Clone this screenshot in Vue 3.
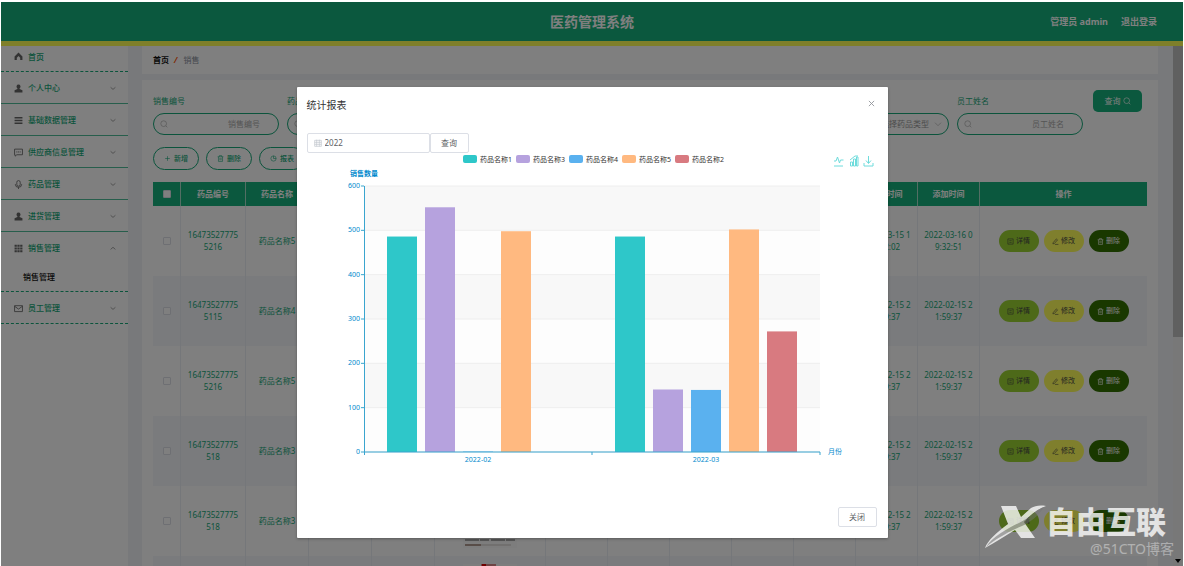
<script setup>
import { ref } from 'vue'

const menu = [
  { name: '首页', icon: 'home', short: true },
  { name: '个人中心', icon: 'user', arrow: 'down' },
  { name: '基础数据管理', icon: 'list', arrow: 'down' },
  { name: '供应商信息管理', icon: 'chat', arrow: 'down' },
  { name: '药品管理', icon: 'mic', arrow: 'down' },
  { name: '进货管理', icon: 'user', arrow: 'down' },
  { name: '销售管理', icon: 'grid', arrow: 'up', children: ['销售管理'] },
  { name: '员工管理', icon: 'mail', arrow: 'down' },
]

const filters = [
  { id: 'f1', label: '销售编号', type: 'text' },
  { id: 'f2', label: '药品名称', type: 'text' },
  { id: 'f3', label: '', type: 'none' },
  { id: 'f4', label: '', type: 'none' },
  { id: 'f5', label: '', type: 'none' },
  { id: 'f6', label: '药品类型', type: 'select' },
  { id: 'f7', label: '员工姓名', type: 'text' },
]

const rows = [
  { code: '164735277755216', name: '药品名称5', sold: '2022-03-15 14:52:02', added: '2022-03-16 09:32:51' },
  { code: '164735277755115', name: '药品名称4', sold: '2022-02-15 21:59:37', added: '2022-02-15 21:59:37' },
  { code: '164735277755216', name: '药品名称5', sold: '2022-02-15 21:59:37', added: '2022-02-15 21:59:37' },
  { code: '16473527775518', name: '药品名称3', sold: '2022-02-15 21:59:37', added: '2022-02-15 21:59:37' },
  { code: '16473527775518', name: '药品名称3', sold: '2022-02-15 21:59:37', added: '2022-02-15 21:59:37' },
]

const year = ref('2022')

const series = [
  { name: '药品名称1', color: '#2ec7c9', data: [486, 486] },
  { name: '药品名称3', color: '#b6a2de', data: [552, 141] },
  { name: '药品名称4', color: '#5ab1ef', data: [1, 140] },
  { name: '药品名称5', color: '#ffb980', data: [498, 502] },
  { name: '药品名称2', color: '#d87a80', data: [0, 272] },
]
const months = ['2022-02', '2022-03']

const plot = { left: 57, top: 32, width: 456, height: 266 }
const ticks = [600, 500, 400, 300, 200, 100, 0]
const yOf = (v) => plot.top + plot.height * (1 - v / 600)
const half = plot.width / 2
const bars = series.flatMap((s, i) =>
  s.data.map((v, m) => ({
    x: plot.left + m * half + 23 + i * 38,
    y: yOf(v),
    h: (plot.height * v) / 600,
    color: s.color,
  })).filter((b) => b.h > 0)
)
</script>

<template>
  <div class="screen">
    <div class="page">
      <header class="top">
        <h1>医药管理系统</h1>
        <div class="account">
          <span>管理员 admin</span>
          <a href="#">退出登录</a>
        </div>
      </header>

      <div class="body">
        <nav class="side">
          <div v-for="m in menu" :key="m.name + m.icon" class="group" :class="{ dotted: m.short || m.icon === 'grid' || m.icon === 'mail' }">
            <a href="#" class="item" :class="{ short: m.short }">
              <svg class="mi" viewBox="0 0 16 16" aria-hidden="true">
                <path v-if="m.icon === 'home'" d="M8 1 1 8v6h4v-4l3-3 3 3v4h4V8z" fill="currentColor" />
                <path v-else-if="m.icon === 'user'" d="M8 1a3.6 3.6 0 0 1 2 6.600v1.400l5 2v4H1v-4l5-2V7.600A3.600 3.600 0 0 1 8 1z" fill="currentColor" />
                <path v-else-if="m.icon === 'list'" d="M1 3h14M1 8h14M1 13h14" stroke="currentColor" stroke-width="2.500" />
                <path v-else-if="m.icon === 'chat'" d="M1 2h14v10H5l-3 2.500V12H1zM4 7h2m1 0h2m1 0h2" fill="none" stroke="currentColor" stroke-width="1.500" />
                <path v-else-if="m.icon === 'mic'" d="M5 4a3 3 0 0 1 6 0v4a3 3 0 0 1-6 0zM2.500 7v1a5.500 5 0 0 0 11 0V7M8 13v3" fill="none" stroke="currentColor" stroke-width="1.500" />
                <path v-else-if="m.icon === 'grid'" d="M1 3h4m1 0h4m1 0h4M1 8h4m1 0h4m1 0h4M1 13h4m1 0h4m1 0h4" stroke="currentColor" stroke-width="3.500" />
                <path v-else d="M1 3h14v10.500H1zM1 4l7 5 7-5" fill="none" stroke="currentColor" stroke-width="1.500" />
              </svg>
              <span>{{ m.name }}</span>
              <svg v-if="m.arrow" class="arrow" viewBox="0 0 10 6" aria-hidden="true">
                <path :d="m.arrow === 'down' ? 'M1 1l4 3.500 4-3.500' : 'M1 4.500 5 1l4 3.500'" fill="none" stroke="currentColor" stroke-width="1.300" />
              </svg>
            </a>
            <a v-for="c in m.children" :key="c" href="#" class="sub">{{ c }}</a>
          </div>
        </nav>

        <main class="main">
          <div class="crumb">
            <a href="#">首页</a><i>/</i><span>销售</span>
          </div>

          <section class="card">
            <form class="filters" @submit.prevent>
              <div v-for="f in filters" :key="f.id" class="field">
                <template v-if="f.type === 'text'">
                  <label :for="f.id">{{ f.label }}</label>
                  <div class="box">
                    <svg class="ic" viewBox="0 0 12 12" aria-hidden="true"><circle cx="5.500" cy="5.500" r="4.300" fill="none" stroke="currentColor" /><path d="M8.800 8.800l2.200 2.200" stroke="currentColor" /></svg>
                    <input :id="f.id" type="text" :placeholder="f.label" />
                  </div>
                </template>
                <template v-else-if="f.type === 'select'">
                  <label :for="f.id">{{ f.label }}</label>
                  <div class="box">
                    <select :id="f.id"><option>请选择药品类型</option></select>
                    <svg class="ic" viewBox="0 0 12 12" aria-hidden="true"><path d="M1.500 4 6 8.500 10.500 4" fill="none" stroke="currentColor" /></svg>
                  </div>
                </template>
              </div>
              <button class="query" type="submit">查询
                <svg class="ic" viewBox="0 0 12 12" aria-hidden="true"><circle cx="5.500" cy="5.500" r="4.300" fill="none" stroke="currentColor" /><path d="M8.800 8.800l2.200 2.200" stroke="currentColor" /></svg>
              </button>
            </form>

            <div class="tools">
              <button type="button">
                <svg class="ic" viewBox="0 0 12 12" aria-hidden="true"><path d="M6 2v8M2 6h8" stroke="currentColor" /></svg>新增
              </button>
              <button type="button">
                <svg class="ic" viewBox="0 0 12 12" aria-hidden="true"><path d="M1 3h10M4 3V1h4v2M2.500 3v8h7V3M5 5v4M7 5v4" fill="none" stroke="currentColor" /></svg>删除
              </button>
              <button type="button">
                <svg class="ic" viewBox="0 0 12 12" aria-hidden="true"><circle cx="6" cy="6" r="4.500" fill="none" stroke="currentColor" /><path d="M6 1.500V6h4.500" fill="none" stroke="currentColor" /></svg>报表
              </button>
            </div>

            <table class="grid">
              <colgroup>
                <col class="c-check" /><col class="c-code" /><col v-for="n in 3" :key="'a' + n" class="c-mid" />
                <col class="c-pic" /><col v-for="n in 7" :key="'b' + n" class="c-std" /><col />
              </colgroup>
              <thead>
                <tr>
                  <th><input type="checkbox" aria-label="全选" /></th>
                  <th>药品编号</th>
                  <th>药品名称</th>
                  <th v-for="n in 8" :key="n"></th>
                  <th>销售时间</th>
                  <th>添加时间</th>
                  <th>操作</th>
                </tr>
              </thead>
              <tbody>
                <tr v-for="(r, i) in rows" :key="i">
                  <td><input type="checkbox" aria-label="选择" /></td>
                  <td>{{ r.code }}</td>
                  <td class="nowrap">{{ r.name }}</td>
                  <td></td>
                  <td></td>
                  <td>
                    <svg class="pic" viewBox="0 0 54 54" aria-hidden="true">
                      <rect width="54" height="54" fill="#fafafa" />
                      <path d="M18 1h15" stroke="#d88" stroke-width="2" /><path d="M19 1h4" stroke="#e00000" stroke-width="2" />
                      <path d="M2 46h50" stroke="#aaa" stroke-width="2" stroke-dasharray="14 1 9 2" />
                      <path d="M2 51h16" stroke="#b09a90" stroke-width="2" /><path d="M18 51h30" stroke="#cdc6c2" />
                    </svg>
                  </td>
                  <td v-for="n in 5" :key="n"></td>
                  <td>{{ r.sold }}</td>
                  <td>{{ r.added }}</td>
                  <td>
                    <div class="ops">
                      <button type="button" class="op view">
                        <svg class="ic" viewBox="0 0 12 12" aria-hidden="true"><path d="M1.500 1.500h9v9h-9zM4 4.500h4M4 7.500h4" fill="none" stroke="currentColor" /></svg>详情
                      </button>
                      <button type="button" class="op edit">
                        <svg class="ic" viewBox="0 0 12 12" aria-hidden="true"><path d="M2 8 7.500 1.500l2 1.700L4 9.500l-2.500.5zM5 11h6" fill="none" stroke="currentColor" /></svg>修改
                      </button>
                      <button type="button" class="op del">
                        <svg class="ic" viewBox="0 0 12 12" aria-hidden="true"><path d="M1 3h10M4 3V1h4v2M2.500 3v8h7V3M5 5v4M7 5v4" fill="none" stroke="currentColor" /></svg>删除
                      </button>
                    </div>
                  </td>
                </tr>
                <tr>
                  <td v-for="n in 5" :key="'l' + n"></td>
                  <td>
                    <svg class="pic" viewBox="0 0 54 54" aria-hidden="true">
                      <rect width="54" height="54" fill="#fafafa" />
                      <path d="M18 1h15" stroke="#d88" stroke-width="2" /><path d="M19 1h4" stroke="#e00000" stroke-width="2" />
                    </svg>
                  </td>
                  <td v-for="n in 8" :key="'r' + n"></td>
                </tr>
              </tbody>
            </table>
          </section>
        </main>

        <div class="scroll" aria-hidden="true">
          <div class="thumb"></div>
          <svg viewBox="0 0 10 10"><path d="M2 3h6L5 7z" /></svg>
        </div>
      </div>

      <div class="mask">
        <div class="dialog" role="dialog" aria-labelledby="dlg-title">
          <div class="dlg-head">
            <h2 id="dlg-title">统计报表</h2>
            <button type="button" class="close" aria-label="关闭">
              <svg viewBox="0 0 8 8" aria-hidden="true"><path d="M1 1l6 6M7 1 1 7" stroke="currentColor" /></svg>
            </button>
          </div>
          <div class="pick">
            <div class="date">
              <svg viewBox="0 0 12 12" aria-hidden="true"><path d="M1 2h10v9H1zM1 5h10M1 8h10M4 1v10M8 1v10" fill="none" stroke="currentColor" /></svg>
              <input v-model="year" type="text" aria-label="年份" />
            </div>
            <button type="button" class="plain">查询</button>
          </div>

          <svg class="chart" viewBox="0 0 571 342" role="img" aria-label="销售数量统计">
            <g v-for="(s, i) in series" :key="s.name">
              <rect :x="156 + i * 53" y="1" width="14" height="8" rx="2" :fill="s.color" />
              <text :x="173 + i * 53" y="8" class="legend">{{ s.name }}</text>
            </g>
            <g class="toolbox">
              <path d="M527 7h2l1.500-4 2 6 1-3h3M527 12h9" />
              <path d="M543.500 12V8h2v4zM546.500 12V5h2v7zM549.500 12V3h1.500v9zM543 6l5-4h3" />
              <path d="M561.500 2v7M559 6.500l2.500 3 2.500-3M557 9v3h9V9" />
            </g>
            <template v-for="(t, i) in ticks" :key="t">
              <rect v-if="t > 0" :x="plot.left" :y="yOf(t)" :width="plot.width" :height="plot.height / 6" :fill="i % 2 ? '#fdfdfd' : '#f8f8f8'" />
              <path :d="`M${plot.left} ${yOf(t)}h${plot.width}`" class="split" />
            </template>
            <rect v-for="(b, i) in bars" :key="i" :x="b.x" :y="b.y" width="30" :height="b.h" :fill="b.color" />
            <path :d="`M${plot.left + 0.5} ${plot.top}V${plot.top + plot.height + 3}`" class="axis" />
            <path v-for="t in ticks" :key="'t' + t" :d="`M${plot.left - 3} ${yOf(t)}h3`" class="axis" />
            <path :d="`M${plot.left} ${plot.top + plot.height}h${plot.width}v3M${plot.left + half} ${plot.top + plot.height}v3`" class="axis" />
            <text v-for="t in ticks" :key="'l' + t" :x="plot.left - 4" :y="yOf(t) + 2" text-anchor="end" class="lab">{{ t }}</text>
            <text v-for="(m, i) in months" :key="m" :x="plot.left + half * (i + 0.5)" :y="plot.top + plot.height + 10" text-anchor="middle" class="lab">{{ m }}</text>
            <text x="57" y="22" text-anchor="middle" class="lab strong">销售数量</text>
            <text x="521" y="300" class="lab">月份</text>
          </svg>

          <div class="dlg-foot"><button type="button" class="plain">关闭</button></div>
        </div>
      </div>

      <div class="mark">
        <svg viewBox="0 0 62 44" aria-hidden="true">
          <path d="M17 1h15l5 11 10-9c4-2 8-3 15-2C54 4 47 9 40 17l11 16H37l-6-8C21 31 12 37 1 43 4 35 12 28 24 19z" fill="#fff" />
          <path d="M2 42C10 29 30 21 42 14 49 9 54 4 60 2 54 11 47 17 38 21 22 28 12 34 2 42z" fill="#777" opacity=".6" />
        </svg>
        <div class="words"><strong>自由互联</strong><span>@51CTO博客</span></div>
      </div>
    </div>
  </div>
</template>

<style>
html, body { margin: 0; background: #fff; }
</style>

<style scoped>
* { box-sizing: border-box; }
.screen {
  height: 100vh;
  padding: 2px 1px 0;
  overflow: hidden;
  font: 8px/12px "Noto Sans", "Noto Sans CJK SC", sans-serif;
  color: #16a878;
}
a { color: inherit; text-decoration: none; }
button, input, select { font: inherit; color: inherit; margin: 0; }
button { display: inline-flex; align-items: center; justify-content: center; padding: 0; cursor: pointer; }
h1, h2 { margin: 0; }
.ic { width: 8px; height: 8px; flex: none; }

.page { position: relative; height: 100%; display: flex; flex-direction: column; overflow: hidden; }
.top {
  display: grid;
  grid-template-columns: 1fr auto 1fr;
  align-items: center;
  flex: none;
  height: 44px;
  background: #16b07c;
  border-bottom: 5px solid #ffff55;
  color: #fff;
}
.top h1 { grid-column: 2; font-size: 14px; line-height: 20px; }
.account { display: flex; justify-content: flex-end; gap: 13px; padding-right: 26px; font-size: 9px; font-weight: 700; }

.body { flex: 1; display: flex; min-height: 0; background: #f0f2f6; }
.side { width: 127px; flex: none; background: #fff; font-weight: 500; }
.group { border-bottom: 1px solid #4fbc98; }
.group.dotted { border-bottom: 1px dashed #16a878; }
.item { display: flex; align-items: center; height: 31px; padding: 1px 12px 0 13px; }
.item.short { height: 25px; padding-bottom: 5px; }
.item span { flex: 1; padding-left: 5px; }
.mi { width: 9px; height: 9px; color: #666; }
.arrow { width: 6px; height: 5px; color: #888; }
.sub { display: flex; align-items: center; height: 28px; padding-left: 22px; color: #111; }

.main { flex: 1; min-width: 0; padding: 0 15px 0 14px; }
.crumb { display: flex; align-items: center; height: 28px; padding-left: 11px; background: #fff; color: #888e9a; }
.crumb a { color: #111; font-weight: 700; }
.crumb i { margin: 0 6px 0 5px; color: #f50; font-weight: 700; }
.card { margin-top: 6px; padding: 10px 11px 0; height: 600px; background: #fff; }
.filters { display: flex; gap: 8px; }
.field { flex: 0 0 126px; }
.field label { display: block; padding-top: 5px; height: 23px; }
.box { display: flex; align-items: center; gap: 5px; height: 22px; padding: 0 18px 0 6px; border: 1px solid #16a878; border-radius: 11px; color: #aaa; }
.box input { flex: 1; width: 0; min-width: 0; border: 0; padding: 0; background: none; outline: 0; text-align: right; }
.box input::placeholder { color: #aaa; }
.box:has(select) { padding: 0 6px; justify-content: flex-end; }
.box select { appearance: none; border: 0; background: none; padding: 0; color: #999; }
.query { margin-left: 2px; width: 49px; height: 22px; gap: 2px; border: 0; border-radius: 5px; background: #16b07c; color: #fff; }

.tools { display: flex; gap: 7px; padding: 12px 0; }
.tools button { width: 46px; height: 23px; gap: 3px; border: 1px solid #16a878; border-radius: 12px; background: #fff; font-size: 7px; font-weight: 500; }
.tools .ic { width: 7px; height: 7px; }

.grid { width: 100%; table-layout: fixed; border-collapse: separate; border-spacing: 0; text-align: center; }
.c-check { width: 28px; }
.c-code { width: 65px; }
.c-mid { width: 63px; }
.c-pic { width: 111px; }
.c-std { width: 62px; }
.grid th { height: 24px; padding: 0; background: #16b07c; color: #fff; border-right: 1px solid #a6ddc8; }
.grid td { height: 70px; padding: 0 5px; border-right: 1px solid #ebeef5; word-break: break-all; }
.grid th:last-child, .grid td:last-child { border-right: 0; }
.grid tbody tr:nth-child(even) { background: #f4f6fa; }
.grid .nowrap { white-space: nowrap; padding: 0; }
.grid input { appearance: none; display: block; width: 8px; height: 8px; margin: 0 auto; border: 1px solid #dcdfe6; border-radius: 1px; background: #fff; }
.pic { display: block; width: 54px; height: 54px; margin: 0 auto; }
.ops { display: flex; justify-content: center; gap: 5px; }
.op { width: 40px; height: 22px; gap: 2px; border: 0; border-radius: 11px; font-size: 7px; color: #444; }
.op .ic { width: 7px; height: 7px; }
.view { background: #9ad232; }
.edit { background: #ffff5a; }
.del { background: #337000; color: #fff; }

.scroll { display: flex; flex-direction: column; justify-content: space-between; width: 10px; flex: none; background: #f1f1f1; }
.thumb { height: 56%; background: #c1c1c1; }
.scroll svg { width: 10px; height: 10px; }

.mask { position: absolute; inset: 0; background: rgba(0, 0, 0, 0.5); }
.dialog { width: 50%; margin: 85px auto 0; padding: 10px; background: #fff; border-radius: 1px; box-shadow: 0 1px 3px rgba(0, 0, 0, 0.3); color: #606266; }
.dlg-head { display: flex; justify-content: space-between; height: 36px; }
.dlg-head h2 { font-size: 10px; line-height: 16px; font-weight: 400; color: #303133; }
.close { width: 12px; height: 12px; border: 0; background: none; color: #909399; }
.close svg { width: 7px; height: 7px; }
.pick { display: flex; }
.date { display: flex; align-items: center; gap: 3px; width: 123px; height: 20px; padding: 0 6px; border: 1px solid #dcdfe6; border-radius: 2px; }
.date svg { width: 8px; height: 8px; color: #c0c4cc; flex: none; }
.date input { flex: 1; min-width: 0; border: 0; padding: 0; outline: 0; background: none; }
.plain { width: 39px; height: 20px; border: 1px solid #dcdfe6; border-radius: 2px; background: #fff; }
.chart { display: block; width: 100%; height: auto; margin-top: 1px; }
.legend { font-size: 7px; fill: #333; }
.toolbox { fill: none; stroke: #6fdcdc; }
.split { stroke: #eee; }
.axis { fill: none; stroke: #3aa5cf; }
.lab { font-size: 7px; fill: #008acd; }
.strong { font-weight: 700; }
.dlg-foot { display: flex; justify-content: flex-end; padding: 11px 1px 1px 0; }

.mark { position: absolute; right: 9px; bottom: 9px; display: flex; align-items: flex-start; opacity: 0.78; color: #fff; }
.mark svg { width: 62px; height: 44px; margin-top: 2px; }
.words { display: flex; flex-direction: column; }
.words strong { padding-right: 8px; font-size: 30px; line-height: 38px; font-weight: 900; }
.words span { align-self: flex-end; font-size: 14px; line-height: 16px; opacity: 0.5; }
</style>
